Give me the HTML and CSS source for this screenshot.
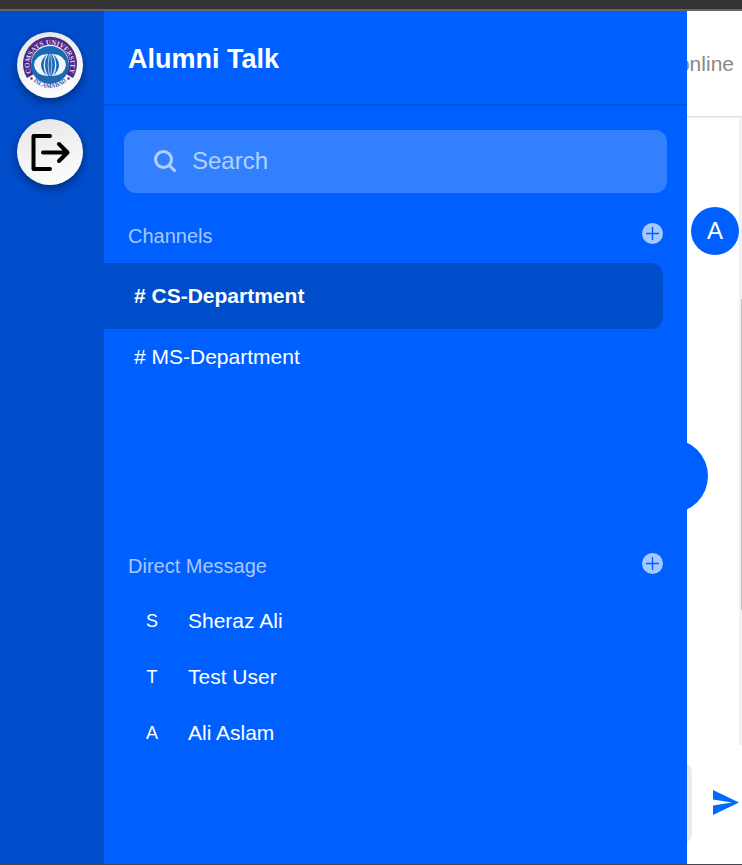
FILE: index.html
```html
<!DOCTYPE html>
<html lang="en">
<head>
<meta charset="utf-8">
<meta name="viewport" content="width=device-width, initial-scale=1">
<title>Alumni Talk</title>
<link rel="stylesheet" href="styles.css">
</head>
<body>
<div class="app">
  <nav class="rail">
    <a class="rail-button" href="#" aria-label="Home">
      <svg width="66" height="66" viewBox="0 0 66 66">
        <defs><path id="top-arc" d="M15.600 43.900 A20.500 20.500 0 1 1 50.400 43.900"/><path id="bottom-arc" d="M12 43 A23.500 23.500 0 0 0 54 43"/></defs>
        <circle cx="33" cy="33" r="27" fill="#f8f8fb"/>
        <path d="M10 46 A27 27 0 1 1 56 46 L49 42 A19 19 0 1 0 17 42 Z" fill="#4c2a87"/>
        <circle cx="33" cy="33" r="19" fill="#1c69b3"/>
        <path d="M17 33 Q18 23 30 22 C22 29 22 37 30 44 Q18 43 17 33Z M49 33 Q48 23 36 22 C44 29 44 37 36 44 Q48 43 49 33Z" fill="#edf4fa"/>
        <g fill="none" stroke="#e5f0fa"><path d="M30.500 22 Q24 33 30.500 44 M35.500 22 Q42 33 35.500 44" stroke-width="1.300"/><path d="M32.300 22 Q30 33 32.300 44 M33.700 22 Q36 33 33.700 44" stroke-width=".7"/></g>
        <text class="seal-top"><textPath href="#top-arc" startOffset="50%" text-anchor="middle">COMSATS UNIVERSITY</textPath></text>
        <text class="seal-bottom"><textPath href="#bottom-arc" startOffset="50%" text-anchor="middle">ISLAMABAD</textPath></text>
        <circle cx="14.500" cy="46.500" r="1.200" fill="#4c2a87"/><circle cx="51.500" cy="46.500" r="1.200" fill="#4c2a87"/>
      </svg>
    </a>
    <button class="rail-button" type="button" aria-label="Log out">
      <svg width="66" height="66" viewBox="0 0 66 66" fill="none" stroke="#000" stroke-width="4" stroke-linejoin="round" stroke-linecap="round"><path d="M33 17 H16.500 V50 H33 M26 33.500 H50.500 M42 25 L50.500 33.500 L42 42"/></svg>
    </button>
  </nav>
  <aside class="panel">
    <header class="panel-header"><h1>Alumni Talk</h1></header>
    <label class="search">
      <svg width="24" height="24" viewBox="0 0 24 24" fill="none" stroke="currentColor" stroke-width="3" stroke-linecap="round"><circle cx="10.500" cy="9.500" r="8"/><path d="M16.500 15.500 L21.500 20.500"/></svg>
      <input type="search" placeholder="Search" aria-label="Search">
    </label>
    <section class="group channels">
      <div class="group-header">
        <h2>Channels</h2>
        <button class="add" type="button" aria-label="Add channel"><svg width="21" height="21" viewBox="0 0 21 21"><circle cx="10.500" cy="10.500" r="10.500" fill="#a6c8ff"/><path d="M10.500 4.500 V16.500 M4.500 10.500 H16.500" stroke="#0060ff" stroke-width="1.400" stroke-linecap="round"/></svg></button>
      </div>
      <a class="channel active" href="#"># CS-Department</a>
      <a class="channel" href="#"># MS-Department</a>
    </section>
    <section class="group">
      <div class="group-header">
        <h2>Direct Message</h2>
        <button class="add" type="button" aria-label="Add direct message"><svg width="21" height="21" viewBox="0 0 21 21"><circle cx="10.500" cy="10.500" r="10.500" fill="#a6c8ff"/><path d="M10.500 4.500 V16.500 M4.500 10.500 H16.500" stroke="#0060ff" stroke-width="1.400" stroke-linecap="round"/></svg></button>
      </div>
      <a class="person" href="#"><span class="initial">S</span>Sheraz Ali</a>
      <a class="person" href="#"><span class="initial">T</span>Test User</a>
      <a class="person" href="#"><span class="initial">A</span>Ali Aslam</a>
    </section>
    <button class="toggle" type="button" aria-label="Toggle sidebar"></button>
  </aside>
  <main class="chat">
    <header class="chat-header"><span>online</span></header>
    <div class="messages">
      <div class="message"><span class="avatar">A</span></div>
      <div class="scrollbar"><div class="thumb"></div></div>
    </div>
    <form class="composer">
      <input class="draft" type="text" aria-label="Message">
      <button class="send" type="button" aria-label="Send"><svg width="26" height="25" viewBox="0 0 26 25"><path d="M0 0 L26 12.500 L0 25 V15.500 L19 12.500 L0 9.500 Z" fill="#006aff"/></svg></button>
    </form>
  </main>
</div>
</body>
</html>
```
FILE: styles.css
```css
* { box-sizing: border-box; }

body {
  margin: 0;
  background: #fff;
  font-family: "Liberation Sans", Arial, sans-serif;
}

button {
  padding: 0;
  border: 0;
  background: none;
  font: inherit;
}

a { color: inherit; text-decoration: none; }
svg { display: block; flex: none; }
h1, h2 { margin: 0; }

.app {
  display: grid;
  grid-template-columns: 104px 1fr 55px;
  min-height: 100vh;
  border-top: 9px solid #333;
  border-bottom: 1px solid #44474d;
}

.rail, .panel, .chat { border-top: 2px solid #666; }

.rail {
  display: flex;
  flex-direction: column;
  gap: 21px;
  padding: 21px 17px;
  background: #004dcc;
}

.rail-button {
  width: 66px;
  height: 66px;
  border-radius: 50%;
  background: linear-gradient(165deg, #e6e6e6, #fff);
  box-shadow: 0 4px 10px rgba(0, 0, 0, .4);
}

.seal-top { fill: #e2d9ee; font: bold 7px "Liberation Serif", serif; }
.seal-bottom { fill: #3c5ba3; font: bold 6px "Liberation Serif", serif; }

.panel {
  position: relative;
  display: flex;
  flex-direction: column;
  background: #0060ff;
  color: #fff;
}

.panel-header {
  height: 95px;
  padding: 32px 24px;
  border-bottom: 2px solid #0053db;
}

h1 { font-size: 27px; line-height: 32px; }

.search {
  display: flex;
  align-items: center;
  gap: 15px;
  height: 63px;
  margin: 24px 20px;
  padding: 0 29px;
  border-radius: 12px;
  background: #3380ff;
  color: #b3d0ff;
}

.search input {
  flex: 1;
  min-width: 0;
  padding: 0 0 2px;
  border: 0;
  outline: 0;
  background: none;
  color: #fff;
  font: 24px "Liberation Sans", Arial, sans-serif;
}

.search input::placeholder { color: #b3d0ff; opacity: 1; }

.channels { min-height: 330px; }

.group-header {
  display: flex;
  align-items: flex-start;
  justify-content: space-between;
  height: 46px;
  padding: 6px 24px;
}

h2 {
  color: #a6c8ff;
  font-size: 20px;
  font-weight: 400;
  line-height: 26px;
}

.channel {
  display: flex;
  align-items: center;
  height: 56px;
  margin-right: 24px;
  padding-left: 30px;
  font-size: 21px;
}

.channel.active {
  height: 66px;
  border-radius: 0 12px 12px 0;
  background: #004dcc;
  font-weight: 700;
}

.person {
  display: flex;
  align-items: center;
  height: 56px;
  padding: 0 24px;
  font-size: 21px;
}

.initial {
  width: 48px;
  margin-right: 12px;
  font-size: 18px;
  text-align: center;
}

.toggle {
  position: absolute;
  top: 428px;
  right: -21px;
  width: 74px;
  height: 74px;
  border-radius: 50%;
  background: #0060ff;
  clip-path: inset(0 0 0 50px);
}

.chat {
  display: flex;
  flex-direction: column;
  min-width: 0;
  overflow: hidden;
}

.chat-header {
  display: flex;
  flex: none;
  align-items: center;
  justify-content: flex-end;
  height: 106px;
  padding-right: 8px;
  border-bottom: 1px solid #ddd;
  box-shadow: 0 1px 1px #eee;
  color: #888;
  font-size: 21px;
}

.messages {
  display: flex;
  flex: 1;
  justify-content: space-between;
}

.message { padding: 90px 0 0 4px; }

.avatar {
  display: flex;
  align-items: center;
  justify-content: center;
  width: 48px;
  height: 48px;
  border-radius: 50%;
  background: #0060ff;
  color: #fff;
  font-size: 24px;
}

.scrollbar {
  display: flex;
  flex-direction: column;
  align-items: flex-end;
  width: 3px;
  padding: 182px 0 135px;
  background: #f1f1f1;
}

.thumb { flex: 1; width: 1px; background: #c1c1c1; }

.composer {
  display: flex;
  flex: none;
  align-items: center;
  justify-content: flex-end;
  gap: 21px;
  height: 119px;
  padding: 0 3px 4px 0;
}

.draft {
  flex: none;
  width: 200px;
  height: 84px;
  border: 0;
  border-radius: 12px;
  background: #ebebeb;
}
```
